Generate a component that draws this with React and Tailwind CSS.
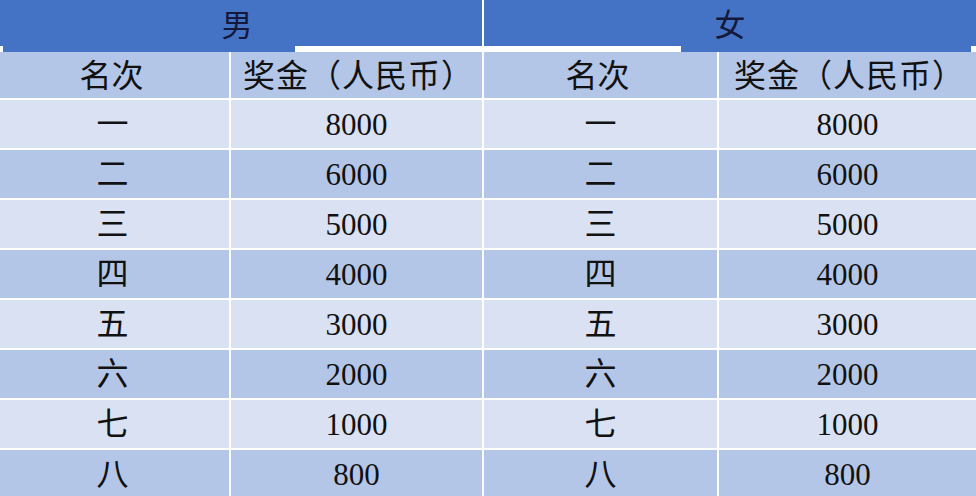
import React from "react";

const rows = [
  ["一", "8000"],
  ["二", "6000"],
  ["三", "5000"],
  ["四", "4000"],
  ["五", "3000"],
  ["六", "2000"],
  ["七", "1000"],
  ["八", "800"],
];

const font = { fontFamily: '"Liberation Serif", "Noto Sans CJK SC", serif' };

function Cjk({ children }) {
  return <span className="text-[32px] font-normal">{children}</span>;
}

export default function App() {
  return (
    <div
      className="w-[976px] h-[496px] overflow-hidden bg-white flex flex-col text-[#111111]"
      style={font}
    >
      <div className="flex h-[52px] gap-[2px] shrink-0">
        <div className="w-[482px] flex flex-col">
          <div className="h-[46px] bg-[#4472c4] flex items-center justify-center pt-[4px] pr-[8px] text-[31px] leading-none text-[#14183a]">
            男
          </div>
          <div className="h-[6px] flex">
            <div className="w-[3px] bg-white" />
            <div className="w-[292px] bg-[#4472c4]" />
            <div className="flex-1 bg-white" />
          </div>
        </div>
        <div className="flex-1 flex flex-col">
          <div className="h-[46px] bg-[#4472c4] flex items-center justify-center pt-[4px] text-[31px] leading-none text-[#14183a]">
            女
          </div>
          <div className="h-[6px] flex">
            <div className="w-[197px] bg-white" />
            <div className="w-[290px] bg-[#4472c4]" />
            <div className="flex-1 bg-white" />
          </div>
        </div>
      </div>
      <div className="grid grid-cols-[229px_251px_233px_257px] grid-rows-[46px] auto-rows-[48px] gap-[2px] text-[31px] leading-none">
        {["名次", "奖金（人民币）", "名次", "奖金（人民币）"].map((t, i) => (
          <div
            key={"h" + i}
            className="bg-[#b4c6e7] flex items-center justify-center pt-[2px]"
          >
            <span className={i % 2 === 1 ? "text-[32px] tracking-[1px] pl-[4px]" : "text-[32px] pr-[6px]"}>{t}</span>
          </div>
        ))}
        {rows.map(([a, b], r) => {
          const bg = r % 2 === 0 ? "bg-[#d9e1f2]" : "bg-[#b4c6e7]";
          return (
            <React.Fragment key={r}>
              <div className={`${bg} flex items-center justify-center pr-[4px]`}>
                <Cjk>{a}</Cjk>
              </div>
              <div className={`${bg} flex items-center justify-center`}>{b}</div>
              <div className={`${bg} flex items-center justify-center`}>
                <Cjk>{a}</Cjk>
              </div>
              <div className={`${bg} flex items-center justify-center`}>{b}</div>
            </React.Fragment>
          );
        })}
      </div>
    </div>
  );
}
